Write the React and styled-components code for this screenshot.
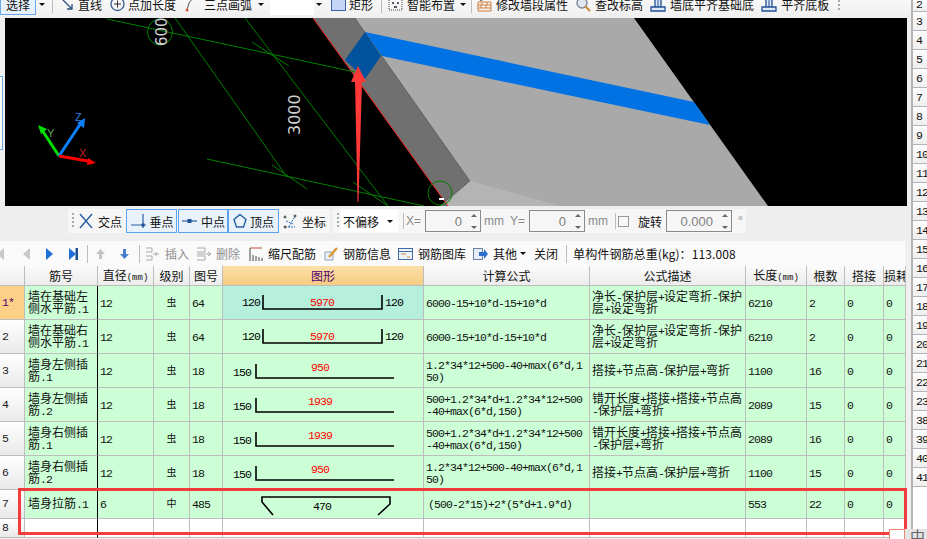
import styled, { createGlobalStyle, css } from "styled-components"

const CJK = `"Noto Sans CJK SC", "Liberation Sans", sans-serif`
const GRID_FONT = `"Liberation Mono", "Noto Sans CJK SC", monospace`

const GlobalStyle = createGlobalStyle`
html, body { margin: 0; padding: 0; background: #f0f0f0; overflow: hidden; }
#root { width: 927px; height: 539px; overflow: hidden; }
`

/* latin text in the grid advances 6px per char, like the bitmap font in the app */
const latin = css`
font-family: "Liberation Mono", monospace;
font-size: 11.5px;
letter-spacing: -0.9px;
`

const Page = styled.div`
position: relative;
display: flex;
width: 927px;
height: 539px;
overflow: hidden;
font-family: ${CJK};
font-size: 12px;
color: #111;
`
const Main = styled.div`
width: 911px;
display: flex;
flex-direction: column;
`
const TopBar = styled.div`
height: 18px;
display: flex;
align-items: flex-start;
overflow: hidden;
background: linear-gradient(#f8f8f8, #efefef);
`
const TopInner = styled.div`
display: flex;
align-items: center;
height: 22px;
margin-top: -7px;
width: 842px;
`
const SelectBtn = styled.div`
width: 36px;
height: 22px;
box-sizing: border-box;
border: 1px solid #6aa9ea;
background: #e6f1fc;
display: flex;
align-items: center;
justify-content: center;
`
const Tool = styled.div`
display: flex;
align-items: center;
flex: none;
white-space: nowrap;
margin-left: ${(p) => p.$ml || 0}px;
gap: ${(p) => p.$gap ?? 4}px;
color: ${(p) => (p.$off ? "#8f8f8f" : "inherit")};
`
const Caret = styled.span`
flex: none;
width: 0;
height: 0;
border-left: 3px solid transparent;
border-right: 3px solid transparent;
border-top: 3px solid #111;
margin-left: ${(p) => p.$ml || 0}px;
margin-right: ${(p) => p.$mr || 0}px;
`
const Sep = styled.span`
flex: none;
width: 1px;
height: ${(p) => p.$h || 18}px;
background: #bdbdbd;
margin-left: ${(p) => p.$ml || 0}px;
`
const Grip = styled.span`
flex: none;
width: 2px;
height: 16px;
margin-left: ${(p) => p.$ml || 0}px;
background: repeating-linear-gradient(#aaa 0 2px, transparent 2px 4px);
`
const WhiteBox = styled.div`
flex: none;
width: 44px;
height: 15px;
margin-top: 7px;
margin-left: 3px;
align-self: flex-start;
background: #fff;
`
const ViewRow = styled.div`
height: 188px;
display: flex;
`
const LeftEdge = styled.div`
width: 5px;
flex: none;
`
const EdgeTab = styled.div`
width: 3px;
height: 74px;
margin-top: 58px;
box-sizing: border-box;
background: #fff;
border: 1px solid #6aa9ea;
border-left: 0;
`
const Canvas = styled.svg`
display: block;
width: 902px;
height: 188px;
background: #000;
flex: none;
`
const SnapBar = styled.div`
height: 35px;
box-sizing: border-box;
padding: 3px 0 0 68px;
display: flex;
align-items: flex-start;
background: #eeeeee;
`
const SnapGroup = styled.div`
height: 24px;
display: flex;
align-items: center;
flex: none;
background: #f6f6f6;
margin-left: ${(p) => p.$ml || 0}px;
padding-right: 4px;
`
const SnapBtn = styled.div`
flex: none;
width: ${(p) => p.$w}px;
height: 24px;
box-sizing: border-box;
display: flex;
align-items: center;
justify-content: center;
gap: 3px;
border: 1px solid #5aa4ee;
background: #e9f2fb;
margin-left: ${(p) => p.$ml || 0}px;
`
const OffsetSelect = styled.div`
flex: none;
width: 57px;
height: 22px;
margin-left: 2px;
padding: 0 5px 0 2px;
box-sizing: border-box;
background: #fff;
display: flex;
align-items: center;
justify-content: space-between;
`
const Unit = styled.span`
flex: none;
width: ${(p) => p.$w}px;
margin-left: ${(p) => p.$ml || 0}px;
color: #8a8a8a;
font-family: "Liberation Sans", sans-serif;
font-size: 12px;
`
const Spin = styled.div`
flex: none;
width: ${(p) => p.$w}px;
height: 22px;
margin-left: ${(p) => p.$ml || 0}px;
box-sizing: border-box;
border: 1px solid #8a8a8a;
background: #f6f6f6;
display: flex;
align-items: center;
justify-content: flex-end;
color: #808080;
font-family: "Liberation Sans", sans-serif;
font-size: 13px;
`
const SpinArrows = styled.div`
width: 13px;
margin-left: 5px;
display: flex;
flex-direction: column;
align-items: center;
gap: 9px;
`
const ArrowUp = styled.span`
width: 0;
height: 0;
border-left: 3px solid transparent;
border-right: 3px solid transparent;
border-bottom: 3px solid #666;
`
const ArrowDown = styled(ArrowUp)`
border-bottom: 0;
border-top: 3px solid #666;
`
const Check = styled.span`
flex: none;
width: 11px;
height: 11px;
margin-left: 2px;
box-sizing: border-box;
border: 1px solid #999;
background: #f8f8f8;
`
const GridBar = styled.div`
height: 25px;
width: 905px;
display: flex;
align-items: center;
background: #fafafa;
white-space: nowrap;
`
const Total = styled.span`
margin-left: 6px;
font-size: 12px;
letter-spacing: 0.1px;
`
const Table = styled.table`
width: 906px;
table-layout: fixed;
border-collapse: separate;
border-spacing: 0;
font-family: ${GRID_FONT};
font-size: 12px;
line-height: 12px;
`
const Head = styled.th`
height: 20px;
padding: 1px 0 0;
box-sizing: border-box;
overflow: hidden;
white-space: nowrap;
font-family: ${CJK};
font-weight: 400;
font-size: 12px;
border-right: 1px solid #bdbdbd;
border-bottom: 1px solid #bdbdbd;
background: ${(p) =>
  p.$active ? "linear-gradient(#fbe0a8, #f5cc82)" : "linear-gradient(#fbfbfb, #ececec)"};
color: ${(p) => (p.$active ? "#500070" : "#111")};
`
const Small = styled.span`
font-size: 9px;
font-family: "Liberation Mono", monospace;
`
const RowHead = styled.td`
height: ${(p) => p.$h}px;
padding: 0 0 0 2px;
box-sizing: border-box;
${latin}
border-right: 1px solid #bdbdbd;
border-bottom: 1px solid #bdbdbd;
background: ${(p) => (p.$active ? "#fdd088" : "linear-gradient(#ffffff, #e9e9e9)")};
color: ${(p) => (p.$active ? "#500070" : "#222")};
`
const Cell = styled.td`
padding: 2px ${(p) => p.$pr ?? 2}px 0 ${(p) => p.$pl ?? 2}px;
box-sizing: border-box;
overflow: hidden;
word-break: break-all;
${(p) => p.$num && latin}
text-align: ${(p) => (p.$center ? "center" : "left")};
background: ${(p) => (p.$bg ? p.$bg : p.$blank ? "#fff" : "#ccffd6")};
border-right: 1px solid ${(p) => (p.$black ? "#000" : "#bdbdbd")};
border-bottom: 1px solid #bdbdbd;
`
const GradeCell = styled(Cell)`
font-size: 10px;
`
const FigureCell = styled(Cell)`
padding: 0;
`
const FigureSvg = styled.svg`
display: block;
width: 200px;
height: ${(p) => p.$h}px;
${latin}
`
const Lat = styled.span`
${latin}
`
const Strip = styled.div`
width: 16px;
flex: none;
box-sizing: border-box;
border-left: 2px solid #b4b4b4;
background: #fff;
${latin}
`
const StripRow = styled.div`
height: ${(p) => p.$h || 19}px;
box-sizing: border-box;
display: flex;
align-items: ${(p) => (p.$h ? "flex-end" : "center")};
padding-left: 3px;
white-space: nowrap;
overflow: hidden;
border-bottom: 1px solid #b4b4b4;
background: linear-gradient(#fdfdfd, #efefef);
`
const Highlight = styled.div`
position: absolute;
left: 18px;
top: 488px;
width: 889px;
height: 47px;
box-sizing: border-box;
border: 3px solid #f43c3c;
`
const Ime = styled.div`
position: absolute;
left: 889px;
top: 529px;
width: 38px;
height: 10px;
display: flex;
gap: 5px;
background: #e4e4e4;
overflow: hidden;
`
const ImeLogo = styled.span`
width: 16px;
height: 14px;
box-sizing: border-box;
border: 1px solid #e88a70;
background: #fff;
`
const ImeChar = styled.span`
color: #666;
font-size: 15px;
line-height: 14px;
`

/* toolbar icons */
const Ico = ({ w = 16, children }) => (
  <svg width={w} height="16" viewBox={`0 0 ${w} 16`} fill="none" style={{ flex: "none" }}>
    {children}
  </svg>
)
const LineIco = () => <Ico w={11}><path d="M0 3 L10 13 M5 13 H10 V8" stroke="#2a4f80" strokeWidth="1.3" /></Ico>
const PlusIco = () => <Ico w={15}><circle cx="7.5" cy="8" r="6.5" stroke="#3a5f8f" strokeWidth="1.3" /><path d="M4 8 H11 M7.5 4.5 V11.5" stroke="#333" /></Ico>
const ArcIco = () => <Ico w={10}><path d="M2 14 Q3 6 8 2" stroke="#555" /><circle cx="2" cy="14" r="1.5" fill="#d9583f" /><circle cx="8" cy="2" r="1.5" fill="#d9583f" /></Ico>
const RectIco = () => <Ico w={15}><rect x="0.5" y="1.5" width="14" height="13" fill="#c4d6f4" stroke="#3c62a8" /></Ico>
const SmartIco = () => <Ico w={15}><rect x="1" y="3" width="13" height="11" stroke="#444" strokeDasharray="1 1" /><path d="M4 7h2M9 7h2M6 11h3" stroke="#223" strokeWidth="1.5" /></Ico>
const BrickIco = () => <Ico w={15}><path d="M1 6H14V15H1ZM1 9H14M1 12H14M5 6V9M10 6V9M4 9V12M9 9V12" stroke="#d07c38" /><path d="M3 5 L10 1" stroke="#777" strokeWidth="1.4" /></Ico>
const LensIco = () => <Ico><circle cx="7" cy="7" r="5" fill="#dfe6ee" stroke="#7d8a96" strokeWidth="1.4" /><path d="M10 10 L15 15" stroke="#c98a35" strokeWidth="2" /></Ico>
const WallIco = () => <Ico><path d="M5 2H11V11H5ZM1 11H15V15H1Z" fill="#dfe8f6" stroke="#1f4f96" strokeWidth="1.3" /><path d="M8 2V11" stroke="#1f4f96" /></Ico>
const CrossIco = () => <Ico w={14}><path d="M1 1 L13 15 M13 1 L1 15" stroke="#2a5f9f" strokeWidth="1.4" /></Ico>
const PerpIco = () => <Ico w={17}><path d="M1 12H16M13 1V15" stroke="#2a5f9f" strokeWidth="1.2" /><rect x="11.5" y="10.5" width="3" height="3" fill="#1f4f96" /></Ico>
const MidIco = () => <Ico w={17}><path d="M1 8H16" stroke="#2a5f9f" strokeWidth="1.2" /><rect x="6.5" y="6" width="4" height="4" fill="#1f4f96" /></Ico>
const PentIco = () => <Ico w={14}><path d="M7 1.5 L13 6.5 L10.5 14 H3.5 L1 6.5 Z" stroke="#2a5f9f" strokeWidth="1.4" /></Ico>
const CoordIco = () => <Ico w={14}><path d="M2 14 H12 M6 14 L12 3 M3 8 L10 11" stroke="#2a6fc0" strokeDasharray="2 1" /><circle cx="2" cy="14" r="1" stroke="#333" /><circle cx="12" cy="3" r="1" stroke="#333" /><circle cx="2" cy="4" r="1" stroke="#333" /></Ico>
const InsertIco = () => <Ico w={15}><path d="M1 2H7V6H1M1 10H7V14H1M8 8H14M11 6V10" stroke="#aaa" /></Ico>
const DeleteIco = () => <Ico w={16}><path d="M1 2H9V6H1M1 10H9V14H1M1 8H15M12 6 L15 8 L12 10" stroke="#aaa" /></Ico>
const ScaleIco = () => <Ico w={14}><path d="M1 2V15M4 9V15M7 10V15M10 11V15M13 12V15" stroke="#444" /><path d="M1 2H13" stroke="#c05030" /></Ico>
const InfoIco = () => <Ico><path d="M2 6H10V14H2Z" stroke="#8aa0c0" fill="#eef2f8" /><path d="M6 11 L14 2" stroke="#d89a3c" strokeWidth="2.5" /></Ico>
const LibIco = () => <Ico w={15}><rect x="0.5" y="2.5" width="14" height="11" fill="#eef3fa" stroke="#3f6aa5" /><path d="M0.5 5.5H14.5" stroke="#3f6aa5" /><path d="M3 8H8M9 11H12" stroke="#d08a3c" /></Ico>
const OtherIco = () => <Ico w={15}><rect x="0.5" y="2.5" width="9" height="11" fill="#e8eef8" stroke="#6a80a0" /><path d="M6 6H11V3 L15 8 L11 13V10H6Z" fill="#2f6fd0" /></Ico>
const Nav = ({ dir = 1, bar, on, ml = 0 }) => (
  <svg width="9" height="14" viewBox="0 0 9 14" style={{ flex: "none", marginLeft: ml }}>
    {dir > 0
      ? <path d="M0 1 L7 7 L0 13 Z" fill={on ? "#1f6fd6" : "#c8c8c8"} />
      : <path d="M8 1 L1 7 L8 13 Z" fill={on ? "#1f6fd6" : "#c8c8c8"} />}
    {bar && <rect x="6.5" y="1" width="2.5" height="12" fill={on ? "#1f4f96" : "#c8c8c8"} />}
  </svg>
)
const Updown = ({ down, on, ml }) => (
  <svg width="9" height="12" viewBox="0 0 9 12" style={{ flex: "none", marginLeft: ml }}>
    <path d={down ? "M3 1H6V6H9L4.5 11 L0 6H3Z" : "M3 11H6V6H9L4.5 1 L0 6H3Z"} fill={on ? "#4a7fd0" : "#c4c4c4"} />
  </svg>
)

const Scene = () => (
  <Canvas viewBox="5 18 902 188">
    <polygon points="355,18 634,18 768,206 440,206 470,181" fill="#a9a9a9" />
    <polygon points="470,181 560,206 445,206" fill="#b4b4b4" />
    <polygon points="313,18 355,18 470,181 440,206 448,206" fill="#707070" />
    <polygon points="365,32 694,102 710,125 382,56" fill="#0072e3" />
    <polygon points="365,32 381,56 365,79 345,60" fill="#00529c" />
    <line x1="313" y1="18" x2="448" y2="206" stroke="#ff2020" />
    <g stroke="#008000" fill="none">
      <line x1="107" y1="19" x2="355" y2="72" />
      <line x1="175" y1="18" x2="287" y2="177" />
      <line x1="245" y1="18" x2="388" y2="206" />
      <line x1="207" y1="159" x2="424" y2="206" />
      <line x1="252" y1="42" x2="289" y2="66" />
      <line x1="272" y1="165" x2="307" y2="189" />
      <line x1="353" y1="182" x2="388" y2="206" />
      <ellipse cx="160" cy="32" rx="12.5" ry="13" />
      <circle cx="440" cy="193" r="12" />
    </g>
    <polygon points="358,66 366,82 362,82 358.5,202 357.5,202 355,82 351,82" fill="#ff3838" />
    <path d="M439 198 H444 V200 H439Z" fill="#fff" />
    <g fill="#d0d0d0" fontFamily="DejaVu Sans, sans-serif">
      <text transform="translate(167 46) rotate(-90)" fontSize="15">600</text>
      <text transform="translate(300 135) rotate(-90)" fontSize="16">3000</text>
    </g>
    <g fontFamily="Liberation Sans, sans-serif" fontSize="11">
      <line x1="59" y1="156" x2="42" y2="130" stroke="#00e000" strokeWidth="3" />
      <polygon points="38,125 47,129 41,134" fill="#00e000" />
      <line x1="59" y1="156" x2="81" y2="123" stroke="#0a80ff" strokeWidth="3" />
      <polygon points="85,118 84,128 77,123" fill="#0a80ff" />
      <line x1="59" y1="156" x2="88" y2="161" stroke="#ff0000" strokeWidth="3" />
      <polygon points="96,163 87,165 88,158" fill="#ff0000" />
      <text x="47" y="137" fill="#60a060">Y</text>
      <text x="75" y="121" fill="#2a80e0">Z</text>
      <text x="79" y="157" fill="#c02020">X</text>
    </g>
  </Canvas>
)

const Figure = ({ kind, label, h }) => {
  if (kind === "both") {
    return (
      <FigureSvg $h={h} viewBox={`0 0 200 ${h}`}>
        <text x="19" y="20">120</text>
        <path d="M40 9 V23 H159 V9" fill="none" stroke="#000" strokeWidth="1.6" />
        <text x="99" y="20" fill="#f00" textAnchor="middle">{label}</text>
        <text x="162" y="20">120</text>
      </FigureSvg>
    )
  }
  if (kind === "hook") {
    return (
      <FigureSvg $h={h} viewBox={`0 0 200 ${h}`}>
        <path d="M50 25 L39 12 V7 H167 V14 L155 25" fill="none" stroke="#000" strokeWidth="1.6" />
        <text x="99" y="20" textAnchor="middle">{label}</text>
      </FigureSvg>
    )
  }
  return (
    <FigureSvg $h={h} viewBox={`0 0 200 ${h}`}>
      <text x="10" y="22">150</text>
      <path d="M33 10 V24 H171" fill="none" stroke="#000" strokeWidth="1.6" />
      <text x="97" y="17" fill="#f00" textAnchor="middle">{label}</text>
    </FigureSvg>
  )
}

// splits mixed text so the latin runs get the narrow grid face
const mixed = (text) =>
  text.split(/([\x20-\x7e]+)/).map((part, i) => (i % 2 ? <Lat key={i}>{part}</Lat> : part))

const DESC_A = "净长-保护层+设定弯折-保护层+设定弯折"
const DESC_B = "搭接+节点高-保护层+弯折"
// the zero width space lets the line break before the hyphen, as in the app
const DESC_C = "错开长度+搭接+搭接+节点高\u200b-保护层+弯折"
const FORM_A = "6000-15+10*d-15+10*d"
const FORM_B = "1.2*34*12+500-40+max(6*d,150)"
const FORM_C = "500+1.2*34*d+1.2*34*12+500-40+max(6*d,150)"

const rows = [
  { id: "1*", name: "墙在基础左侧水平筋.1", d: 12, g: "虫", no: 64, kind: "both", label: "5970", f: FORM_A, desc: DESC_A, len: 6210, n: 2 },
  { id: "2", name: "墙在基础右侧水平筋.1", d: 12, g: "虫", no: 64, kind: "both", label: "5970", f: FORM_A, desc: DESC_A, len: 6210, n: 2 },
  { id: "3", name: "墙身左侧插筋.1", d: 12, g: "虫", no: 18, kind: "left", label: "950", f: FORM_B, desc: DESC_B, len: 1100, n: 16 },
  { id: "4", name: "墙身左侧插筋.2", d: 12, g: "虫", no: 18, kind: "left", label: "1939", f: FORM_C, desc: DESC_C, len: 2089, n: 15 },
  { id: "5", name: "墙身右侧插筋.1", d: 12, g: "虫", no: 18, kind: "left", label: "1939", f: FORM_C, desc: DESC_C, len: 2089, n: 16 },
  { id: "6", name: "墙身右侧插筋.2", d: 12, g: "虫", no: 18, kind: "left", label: "950", f: FORM_B, desc: DESC_B, len: 1100, n: 15 },
  { id: "7", name: "墙身拉筋.1", d: 6, g: "中", no: 485, kind: "hook", label: "470", f: "(500-2*15)+2*(5*d+1.9*d)", desc: "", len: 553, n: 22, h: 29 },
]
const widths = [25, 73, 56, 36, 33, 201, 166, 156, 61, 38, 39, 22]
const stripNums = [3, 4, 5, 6, 7, 8, 9, 10, 11, 12, 13, 14, 15, 16, 17, 18, 19, 20, 21, 22, 23, 38, 39, 40, 41]

const App = () => {
  return (
    <Page>
      <GlobalStyle />
      <Main>
        <TopBar>
          <TopInner>
            <SelectBtn>选择</SelectBtn>
            <Caret $ml={3} />
            <Sep $ml={7} />
            <Tool $ml={9} $gap={5}><LineIco />直线</Tool>
            <Tool $ml={8} $gap={3}><PlusIco />点加长度</Tool>
            <Tool $ml={9} $gap={9}><ArcIco />三点画弧</Tool>
            <Caret $ml={6} $mr={3} />
            <WhiteBox />
            <Caret $ml={2} />
            <Tool $ml={9} $gap={3}><RectIco />矩形</Tool>
            <Sep $ml={8} />
            <Tool $ml={6}><SmartIco />智能布置</Tool>
            <Caret $ml={5} />
            <Sep $ml={5} />
            <Tool $ml={5}><BrickIco />修改墙段属性</Tool>
            <Tool $ml={7}><LensIco />查改标高</Tool>
            <Tool $ml={7}><WallIco />墙底平齐基础底</Tool>
            <Tool $ml={7}><WallIco />平齐底板</Tool>
            <Grip $ml={9} />
          </TopInner>
        </TopBar>
        <ViewRow>
          <LeftEdge><EdgeTab /></LeftEdge>
          <Scene />
        </ViewRow>
        <SnapBar>
          <SnapGroup>
            <Grip $ml={4} />
            <Tool $ml={5} $gap={5}><CrossIco />交点</Tool>
            <SnapBtn $w={51} $ml={4}><PerpIco />垂点</SnapBtn>
            <SnapBtn $w={50} $ml={1}><MidIco />中点</SnapBtn>
            <SnapBtn $w={51}><PentIco />顶点</SnapBtn>
            <Tool $ml={4} $gap={5}><CoordIco />坐标</Tool>
          </SnapGroup>
          <SnapGroup $ml={3}>
            <Grip $ml={4} />
            <OffsetSelect>不偏移<Caret /></OffsetSelect>
            <Sep $ml={5} $h={16} />
            <Unit $ml={2} $w={16}>X=</Unit>
            <Spin $ml={3} $w={56}>0<SpinArrows><ArrowUp /><ArrowDown /></SpinArrows></Spin>
            <Unit $ml={3} $w={22}>mm</Unit>
            <Unit $ml={4} $w={16}>Y=</Unit>
            <Spin $ml={3} $w={56}>0<SpinArrows><ArrowUp /><ArrowDown /></SpinArrows></Spin>
            <Unit $ml={3} $w={22}>mm</Unit>
            <Sep $ml={5} $h={16} />
            <Check />
            <Tool $ml={9}>旋转</Tool>
            <Spin $ml={4} $w={66}>0.000<SpinArrows><ArrowUp /><ArrowDown /></SpinArrows></Spin>
            <Unit $ml={6} $w={4}>°</Unit>
          </SnapGroup>
        </SnapBar>
        <GridBar>
          <Nav dir={-1} ml={-4} />
          <Nav dir={-1} ml={17} />
          <Nav on ml={15} />
          <Nav on bar ml={14} />
          <Sep $ml={9} />
          <Updown ml={8} />
          <Updown down on ml={15} />
          <Sep $ml={10} />
          <Tool $ml={5} $gap={5} $off><InsertIco />插入</Tool>
          <Tool $ml={7} $off><DeleteIco />删除</Tool>
          <Tool $ml={9} $gap={5}><ScaleIco />缩尺配筋</Tool>
          <Tool $ml={7}><InfoIco />钢筋信息</Tool>
          <Tool $ml={7} $gap={5}><LibIco />钢筋图库</Tool>
          <Tool $ml={7} $gap={5}><OtherIco />其他</Tool>
          <Caret $ml={3} />
          <Tool $ml={8}>关闭</Tool>
          <Sep $ml={8} />
          <Total>单构件钢筋总重(kg)：113.008</Total>
        </GridBar>
        <Table>
          <colgroup>
            {widths.map((w, i) => <col key={i} style={{ width: w }} />)}
          </colgroup>
          <thead>
            <tr>
              <Head />
              <Head>筋号</Head>
              <Head>直径<Small>(mm)</Small></Head>
              <Head>级别</Head>
              <Head>图号</Head>
              <Head $active>图形</Head>
              <Head>计算公式</Head>
              <Head>公式描述</Head>
              <Head>长度<Small>(mm)</Small></Head>
              <Head>根数</Head>
              <Head>搭接</Head>
              <Head>损耗</Head>
            </tr>
          </thead>
          <tbody>
            {rows.map((r, i) => {
              const h = r.h || 34
              return (
                <tr key={r.id}>
                  <RowHead $h={h} $active={i === 0}>{r.id}</RowHead>
                  <Cell $pl={3} $black>{mixed(r.name)}</Cell>
                  <Cell $num>{r.d}</Cell>
                  <GradeCell $center>{r.g}</GradeCell>
                  <Cell $num>{r.no}</Cell>
                  <FigureCell $bg={i === 0 ? "#b6f0dc" : undefined}>
                    <Figure kind={r.kind} label={r.label} h={h - 1} />
                  </FigureCell>
                  <Cell $num $pl={r.h ? 4 : 2}>{r.f}</Cell>
                  <Cell $pr={0}>{mixed(r.desc)}</Cell>
                  <Cell $num>{r.len}</Cell>
                  <Cell $num>{r.n}</Cell>
                  <Cell $num>0</Cell>
                  <Cell $num>0</Cell>
                </tr>
              )
            })}
            <tr>
              <RowHead $h={19}>8</RowHead>
              <Cell $blank $black />
              {widths.slice(2).map((w) => <Cell $blank key={w} />)}
            </tr>
          </tbody>
        </Table>
      </Main>
      <Strip>
        <StripRow $h={12}>2</StripRow>
        {stripNums.map((n) => <StripRow key={n}>{n}</StripRow>)}
      </Strip>
      <Highlight />
      <Ime><ImeLogo /><ImeChar>中</ImeChar></Ime>
    </Page>
  )
}

export default App
